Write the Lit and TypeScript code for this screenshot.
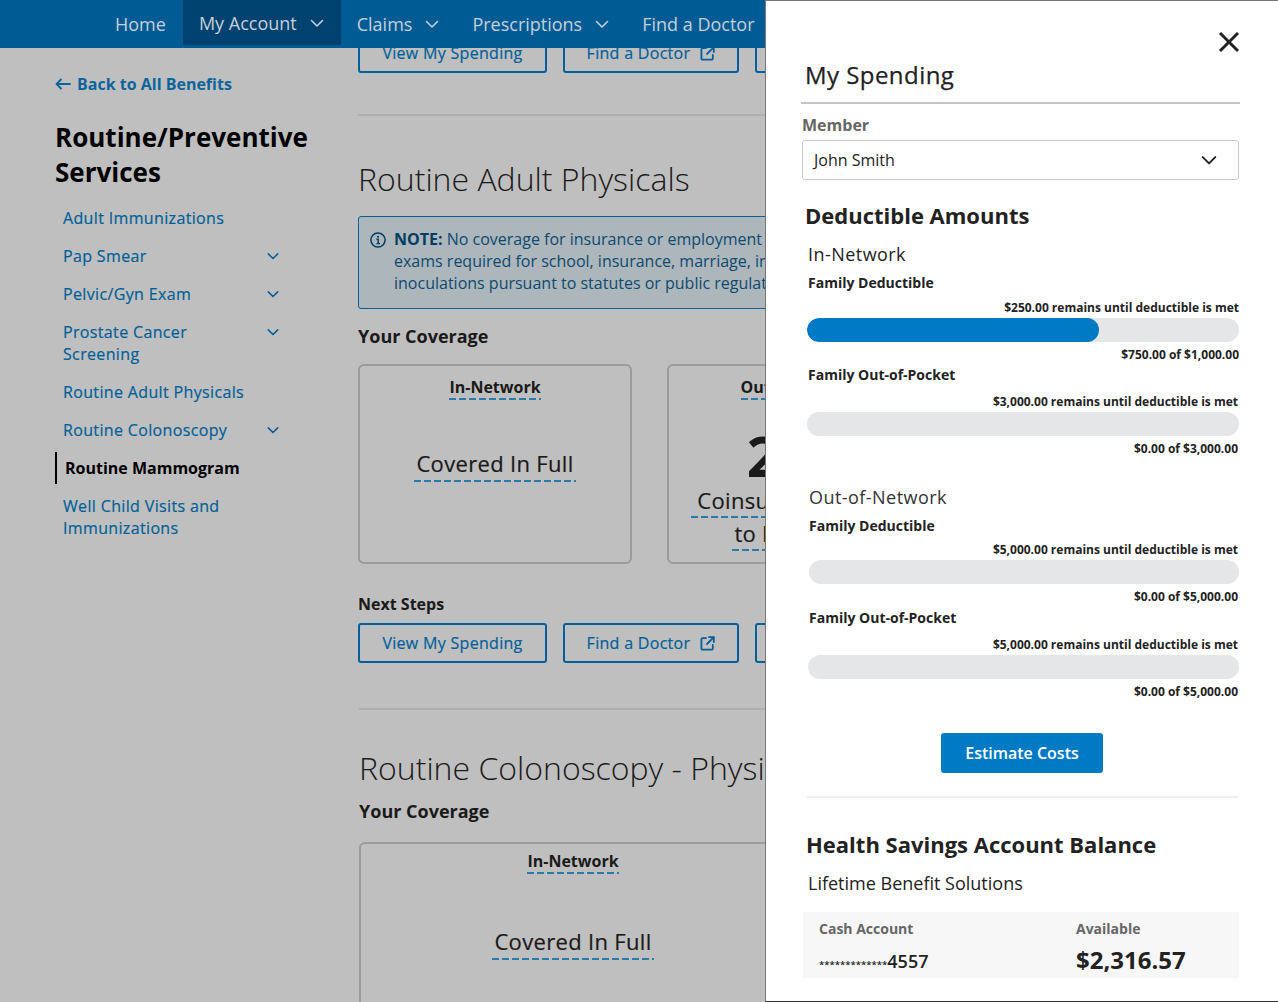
import { LitElement, html, css, svg, type TemplateResult } from "lit";
import { customElement } from "lit/decorators.js";

const chevron = (size: number, sw = 1.8): TemplateResult => html`<svg class="chev" width=${size} height=${size} viewBox="0 0 14 14" fill="none" stroke="currentColor" stroke-width=${sw} stroke-linecap="round" stroke-linejoin="round">${svg`<path d="M1.5 4.5 7 10l5.5-5.5"/>`}</svg>`;

const external = html`<svg width="15" height="15" viewBox="0 0 15 15" fill="none" stroke="currentColor" stroke-width="1.8" stroke-linecap="round" stroke-linejoin="round">${svg`<path d="M6 2.2H2.6a1.2 1.2 0 0 0-1.2 1.2v9a1.2 1.2 0 0 0 1.2 1.2h9a1.2 1.2 0 0 0 1.2-1.2V9"/><path d="M9 1.2h4.8V6"/><path d="M13.6 1.4 7 8"/>`}</svg>`;

const NAV = [
  { label: "Home" },
  { label: "My Account", menu: true, active: true },
  { label: "Claims", menu: true },
  { label: "Prescriptions", menu: true },
  { label: "Find a Doctor" },
];

const SIDE = [
  { label: ["Adult Immunizations"] },
  { label: ["Pap Smear"], menu: true },
  { label: ["Pelvic/Gyn Exam"], menu: true },
  { label: ["Prostate Cancer", "Screening"], menu: true },
  { label: ["Routine Adult Physicals"] },
  { label: ["Routine Colonoscopy"], menu: true },
  { label: ["Routine Mammogram"], active: true },
  { label: ["Well Child Visits and", "Immunizations"] },
];

// nameGap follows the reference's uneven rounding between rows
const IN_NETWORK = [
  { name: "Family Deductible", remain: "$250.00", used: "$750.00 of $1,000.00", pct: 67.7, nameGap: 7, tail: 0 },
  { name: "Family Out-of-Pocket", remain: "$3,000.00", used: "$0.00 of $3,000.00", pct: 0, nameGap: 9, tail: 1 },
];
const OUT_NETWORK = [
  { name: "Family Deductible", remain: "$5,000.00", used: "$0.00 of $5,000.00", pct: 0, nameGap: 6, tail: 1, shift: true },
  { name: "Family Out-of-Pocket", remain: "$5,000.00", used: "$0.00 of $5,000.00", pct: 0, nameGap: 9, tail: 1 },
];

@customElement("spend-meter")
export class SpendMeter extends LitElement {
  static properties = { item: { attribute: false } };
  item: any;

  render() {
    const m = this.item;
    return html`
      <div class="name" style="margin-bottom:${m.nameGap}px">${m.name}</div>
      <div class="small remain" style="padding-right:${m.tail}px">${m.remain} remains until deductible is met</div>
      <div class="bar ${m.shift ? "shift" : ""}">
        ${m.pct ? html`<div class="fill" style="width:${m.pct}%"></div>` : ""}
      </div>
      <div class="small used" style="padding-right:${m.tail}px">${m.used}</div>
    `;
  }

  static styles = css`
    :host {
      display: block;
      font-family: "Open Sans", sans-serif;
      color: #222;
    }
    .name {
      font-size: 14px;
      font-weight: 700;
      line-height: 20px;
      padding-left: 1px;
    }
    .small {
      font-size: 12px;
      font-weight: 700;
      line-height: 16px;
      text-align: right;
    }
    .remain {
      margin-bottom: 2px;
    }
    .used {
      margin-top: 5px;
    }
    .bar {
      height: 24px;
      border-radius: 12px;
      background: #e5e6e7;
      overflow: hidden;
    }
    .bar.shift {
      margin-left: 1px;
    }
    .fill {
      height: 100%;
      background: #007ac5;
      border-radius: 12px;
    }
  `;
}

@customElement("app-root")
export class AppRoot extends LitElement {
  private buttons() {
    return html`
      <div class="btns">
        <a class="btn" style="width:189px">View My Spending</a>
        <a class="btn" style="width:176px">Find a Doctor ${external}</a>
        <a class="btn" style="width:176px">Estimate Costs</a>
      </div>
    `;
  }

  render() {
    return html`
      <div class="page">
        <nav class="nav">
          ${NAV.map(
            (n) => html`<a class="nav-item ${n.active ? "active" : ""}">${n.label}${n.menu ? chevron(14, 1.6) : ""}</a>`
          )}
        </nav>

        <aside class="side">
          <a class="back">
            <svg width="16" height="12" viewBox="0 0 16 12" fill="none" stroke="currentColor" stroke-width="1.8" stroke-linecap="round" stroke-linejoin="round"><path d="M15 6H1.5M6 1.5 1.5 6 6 10.5"/></svg>
            Back to All Benefits
          </a>
          <h1>Routine/Preventive<br />Services</h1>
          <ul>
            ${SIDE.map(
              (s) => html`<li class=${s.active ? "active" : ""}>
                <span>${s.label.map((l) => html`<div>${l}</div>`)}</span>
                ${s.menu ? chevron(12, 1.8) : ""}
              </li>`
            )}
          </ul>
        </aside>

        <main class="main">
          ${this.buttons()}
          <hr class="rule first" />
          <h2>Routine Adult Physicals</h2>
          <div class="note">
            <svg width="16" height="16" viewBox="0 0 16 16" fill="none" stroke="currentColor" stroke-width="1.5"><circle cx="8" cy="8" r="7.1"/><path d="M6.4 7.2H8.2V11.6M6.4 11.6H10" stroke-width="1.4"/><circle cx="8" cy="4.8" r="1" fill="currentColor" stroke="none"/></svg>
            <p><b>NOTE:</b> No coverage for insurance or employment physical<br />exams required for school, insurance, marriage, immigration,<br />inoculations pursuant to statutes or public regulations.</p>
          </div>
          <h3>Your Coverage</h3>
          <div class="cards">
            <div class="card">
              <div class="net"><span class="dash">In-Network</span></div>
              <div class="big-full"><span class="dash pad">Covered In Full</span></div>
            </div>
            <div class="card">
              <div class="net"><span class="dash">Out-of-Network</span></div>
              <div class="pct">20%</div>
              <div class="coins"><span class="dash wide-pad">Coinsurance subject</span><br /><span class="dash thin-pad">to limitations</span></div>
            </div>
          </div>
          <h4>Next Steps</h4>
          ${this.buttons()}
          <div class="second">
            <hr class="rule" />
            <h2>Routine Colonoscopy - Physician Services</h2>
            <h3 class="tight">Your Coverage</h3>
            <div class="card wide">
              <div class="net"><span class="dash">In-Network</span></div>
              <div class="big-full"><span class="dash pad">Covered In Full</span></div>
            </div>
          </div>
        </main>

        <section class="panel">
          <button class="close" aria-label="Close">
            <svg width="22" height="22" viewBox="0 0 22 22" fill="none" stroke="#222" stroke-width="3"><path d="M2 2l18 18M20 2 2 20"/></svg>
          </button>
          <div class="title">My Spending</div>
          <div class="title-rule"></div>
          <div class="field-label">Member</div>
          <div class="select">John Smith ${chevron(16, 1.7)}</div>
          <div class="heading ded">Deductible Amounts</div>
          <div class="group">
            <div class="net-name">In-Network</div>
            ${IN_NETWORK.map((m) => html`<spend-meter .item=${m}></spend-meter>`)}
          </div>
          <div class="group oon">
            <div class="net-name">Out-of-Network</div>
            ${OUT_NETWORK.map((m) => html`<spend-meter .item=${m}></spend-meter>`)}
          </div>
          <div class="cta"><a class="primary">Estimate Costs</a></div>
          <div class="soft-rule"></div>
          <div class="heading hsa">Health Savings Account Balance</div>
          <div class="provider">Lifetime Benefit Solutions</div>
          <div class="account">
            <div class="acct-col">
              <div class="acct-label">Cash Account</div>
              <div class="acct-num"><small>*************</small>4557</div>
            </div>
            <div class="acct-col avail">
              <div class="acct-label">Available</div>
              <div class="acct-amt">$2,316.57</div>
            </div>
          </div>
        </section>
      </div>
    `;
  }

  static styles = css`
    :host {
      display: block;
      font-family: "Open Sans", sans-serif;
      color: #1a1a1a;
    }
    * {
      box-sizing: border-box;
    }
    .page {
      position: relative;
      display: flex;
      width: 1278px;
      height: 1002px;
      overflow: hidden;
      background: #bfbfbf;
    }

    /* nav sits over the scrolled page */
    .nav {
      position: absolute;
      z-index: 2;
      top: 0;
      left: 0;
      right: 0;
      height: 48px;
      display: flex;
      align-items: flex-start;
      padding-left: 99px;
      background: #005b94;
    }
    .nav-item {
      display: flex;
      align-items: center;
      gap: 13px;
      height: 48px;
      padding: 0 16px;
      font-size: 18px;
      color: #c3d0da;
      white-space: nowrap;
    }
    .nav-item:first-child {
      padding-right: 17px;
    }
    .nav-item:has(.chev) {
      padding-right: 17px;
    }
    .nav-item.active {
      height: 45px;
      background: #00426f;
    }

    .side {
      flex: none;
      width: 358px;
      padding: 73px 0 0 55px;
    }
    .back {
      display: flex;
      align-items: center;
      gap: 6px;
      font-size: 16px;
      font-weight: 700;
      line-height: 22px;
      color: #0a659c;
    }
    h1 {
      margin: 25px 0 17px;
      font-size: 26px;
      font-weight: 700;
      line-height: 35px;
      color: #000;
    }
    ul {
      list-style: none;
      margin: 0;
      padding: 0;
      width: 224px;
      display: flex;
      flex-direction: column;
      gap: 16px;
    }
    /* no medium cut of Open Sans is installed: regular, spaced and lightly stroked */
    li {
      display: flex;
      justify-content: space-between;
      align-items: flex-start;
      padding-left: 8px;
      font-size: 16px;
      letter-spacing: 0.35px;
      -webkit-text-stroke: 0.2px currentColor;
      line-height: 22px;
      color: #005f99;
    }
    li .chev {
      margin-top: 5px;
    }
    li.active {
      position: relative;
      padding-left: 10px;
      font-weight: 700;
      letter-spacing: 0;
      -webkit-text-stroke: 0;
      color: #000;
    }
    li.active::before {
      content: "";
      position: absolute;
      left: 0;
      top: -5px;
      bottom: -5px;
      width: 2px;
      background: #000;
    }

    .main {
      flex: none;
      width: 407px;
      overflow: hidden;
      padding-top: 33px;
    }
    .btns {
      display: flex;
      gap: 16px;
    }
    .btn {
      flex: none;
      display: flex;
      align-items: center;
      justify-content: center;
      gap: 10px;
      height: 40px;
      border: 2px solid #00609b;
      border-radius: 3px;
      font-size: 16px;
      letter-spacing: 0.3px;
      -webkit-text-stroke: 0.2px currentColor;
      color: #00609b;
    }
    .rule {
      height: 2px;
      margin: 0;
      border: 0;
      background: #b0b0b0;
    }
    .rule.first {
      margin-top: 41px;
    }
    h2 {
      margin: 0;
      padding-top: 41px;
      font-size: 32px;
      font-weight: 300;
      line-height: 44px;
      white-space: nowrap;
      color: #1a1a1a;
    }
    .second h2 {
      padding-top: 36px;
    }
    .note {
      display: flex;
      gap: 8px;
      width: 700px;
      height: 93px;
      margin-top: 15px;
      padding: 11px 11px;
      border: 1px solid #00609b;
      border-radius: 3px;
      background: #acb6bb;
      color: #0d4a70;
    }
    .note svg {
      flex: none;
      margin-top: 4px;
      color: #003d63;
    }
    .note p {
      margin: 0;
      font-size: 16px;
      line-height: 22px;
      white-space: nowrap;
    }
    .note b {
      font-weight: 700;
      color: #003d63;
    }
    h3 {
      margin: 15px 0 16px;
      font-size: 18px;
      font-weight: 700;
      line-height: 24px;
      color: #1a1a1a;
    }
    h3.tight {
      margin: 9px 0 19px;
    }
    h4 {
      margin: 29px 0 8px;
      font-size: 16px;
      font-weight: 700;
      line-height: 22px;
      color: #1a1a1a;
    }
    .cards {
      display: flex;
      gap: 35px;
      width: 700px;
    }
    .card {
      flex: none;
      width: 274px;
      height: 200px;
      padding-top: 10px;
      border: 2px solid #9b9b9b;
      border-radius: 6px;
      text-align: center;
    }
    .card.wide {
      width: 428px;
      padding-top: 6px;
    }
    .dash {
      display: inline-block;
      padding-bottom: 2px;
      background: linear-gradient(90deg, #2a7ba8 66%, transparent 0) left bottom / 10px 2px repeat-x;
    }
    .dash.pad {
      padding: 0 2px 4px;
    }
    .dash.wide-pad {
      padding: 0 6px 3px;
    }
    .dash.thin-pad {
      padding: 0 2px 3px;
    }
    .net {
      font-size: 16px;
      font-weight: 700;
      line-height: 22px;
    }
    .big-full {
      margin-top: 48px;
      font-size: 22px;
      letter-spacing: 0.33px;
      -webkit-text-stroke: 0.2px currentColor;
      line-height: 30px;
    }
    .wide .big-full {
      margin-top: 52px;
    }
    .pct {
      margin-top: 26px;
      font-size: 56px;
      font-weight: 700;
      line-height: 59px;
    }
    .coins {
      font-size: 22px;
      letter-spacing: 0.33px;
      -webkit-text-stroke: 0.2px currentColor;
      line-height: 30px;
      white-space: nowrap;
    }
    .second {
      margin-left: 1px;
      margin-top: 45px;
    }

    .panel {
      position: absolute;
      z-index: 3;
      top: 0;
      left: 765px;
      width: 513px;
      height: 1002px;
      padding: 0 39px 0 36px;
      background: #fff;
      border-left: 1px solid #777;
      border-top: 1px solid #777;
      border-bottom: 1px solid #333;
      color: #222;
    }
    .close {
      display: block;
      margin: 30px 0 0 auto;
      padding: 0;
      width: 22px;
      height: 22px;
      border: 0;
      background: none;
      transform: translateX(1px);
    }
    .title {
      margin: 5px 0 0 3px;
      font-size: 24px;
      letter-spacing: 0.45px;
      -webkit-text-stroke: 0.25px currentColor;
      line-height: 34px;
    }
    .title-rule {
      height: 2px;
      margin: 10px -1px 0;
      background: #c4c4c4;
    }
    .field-label {
      margin-top: 10px;
      font-size: 16px;
      font-weight: 700;
      line-height: 22px;
      color: #666;
    }
    .select {
      display: flex;
      align-items: center;
      justify-content: space-between;
      height: 40px;
      margin-top: 4px;
      padding: 0 21px 0 11px;
      border: 1px solid #c8c8c8;
      border-radius: 3px;
      font-size: 16px;
    }
    .heading {
      font-size: 22px;
      font-weight: 700;
      line-height: 30px;
    }
    .ded {
      margin: 20px 0 0 3px;
    }
    .group {
      margin-left: 5px;
      margin-top: 12px;
      display: flex;
      flex-direction: column;
    }
    .group.oon {
      margin-left: 6px;
      margin-top: 28px;
    }
    .group.oon .net-name {
      color: #333;
    }
    .group spend-meter + spend-meter {
      margin-top: 2px;
    }
    .group.oon spend-meter + spend-meter {
      margin-top: 3px;
    }
    .net-name {
      font-size: 18px;
      letter-spacing: 0.45px;
      line-height: 24px;
      padding-left: 1px;
      margin-bottom: 7px;
    }
    .cta {
      display: flex;
      justify-content: center;
      margin-top: 33px;
      padding-left: 3px;
    }
    .primary {
      display: flex;
      align-items: center;
      justify-content: center;
      width: 162px;
      height: 40px;
      border-radius: 3px;
      background: #007ac5;
      color: #fff;
      font-size: 16px;
      font-weight: 600;
    }
    .soft-rule {
      height: 2px;
      margin: 23px 0 0 5px;
      background: #eee;
    }
    .hsa {
      margin: 31px 0 0 4px;
    }
    .provider {
      margin: 11px 0 0 6px;
      font-size: 18px;
      line-height: 26px;
    }
    .account {
      display: flex;
      height: 66px;
      margin: 16px 0 0 1px;
      padding: 7px 16px 0;
      background: #f7f7f7;
    }
    .acct-col {
      width: 257px;
    }
    .acct-col.avail {
      width: auto;
    }
    .acct-label {
      font-size: 14px;
      font-weight: 700;
      line-height: 20px;
      color: #666;
    }
    .acct-num {
      margin-top: 9px;
      font-size: 18px;
      font-weight: 600;
      line-height: 26px;
    }
    .acct-num small {
      font-size: 9.6px;
      font-weight: 600;
    }
    .acct-amt {
      margin-top: 5px;
      font-size: 24px;
      font-weight: 700;
      line-height: 32px;
    }
  `;
}
